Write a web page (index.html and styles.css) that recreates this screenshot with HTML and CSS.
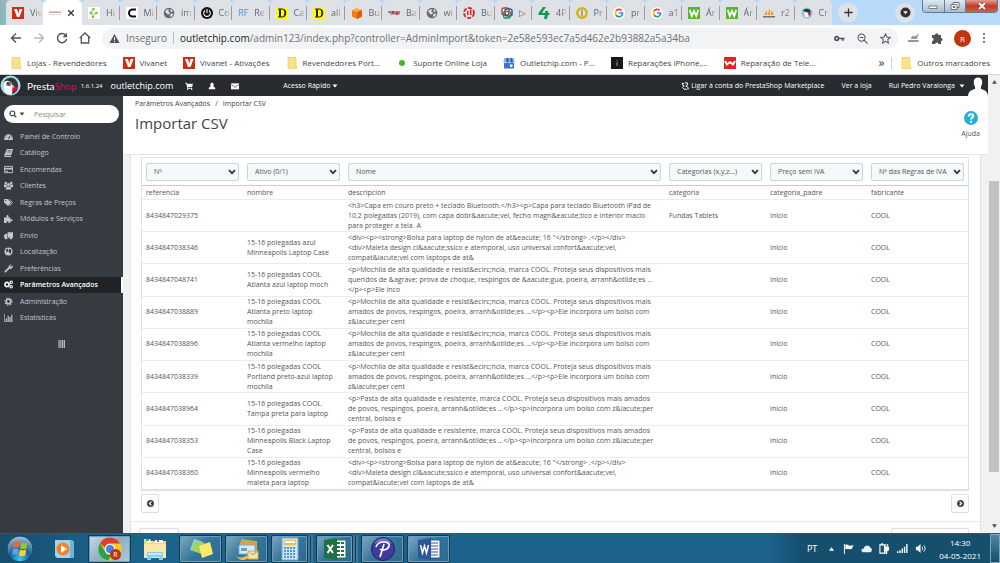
FILE: index.html
```html
<!DOCTYPE html>
<html lang="pt">
<head>
<meta charset="utf-8">
<title>Importar CSV</title>
<link rel="stylesheet" href="styles.css">
</head>
<body>
<svg class="defs" aria-hidden="true">
  <symbol id="viva" viewBox="0 0 12 12"><path fill="#d52b12" d="M0 0h12v12H0z"/><path fill="#fff" d="M2 2h3l1.300 4.500L7.500 2H10.500L7.500 10H5z"/></symbol>
  <symbol id="globe" viewBox="0 0 12 12"><circle cx="6" cy="6" r="5.300" fill="#646a70"/><path fill="#dee1e6" d="M2 4l3-2 1 1-1 1.500 2 1-1 2-2-.5-1-1.500zM8 2l2 2-1.500 1L7 4zM8 6.500l2.500.3-1.500 2.500-2 .7 0-1.500z"/></symbol>
  <symbol id="google" viewBox="0 0 12 12"><circle cx="6" cy="6" r="6" fill="#fff"/><g fill="none" stroke-width="1.700"><path stroke="#ea4335" d="M2.900 4.200A3.500 3.500 0 0 1 8.600 3.500"/><path stroke="#fbbc05" d="M2.900 4.200A3.600 3.600 0 0 0 3 8"/><path stroke="#34a853" d="M3 8a3.500 3.500 0 0 0 5.400.8"/><path stroke="#4285f4" d="M8.400 8.800A3.500 3.500 0 0 0 9.500 6H6"/></g></symbol>
  <symbol id="dee" viewBox="0 0 12 12"><path fill="#ff0" d="M0 0h12v12H0z"/><path fill="#222" fill-rule="evenodd" d="M2 1.500h4.500c5 0 5 9 0 9H2v-1h1v-7H2zM5 2.500v7h1.300c2.800 0 2.800-7 0-7z"/></symbol>
  <symbol id="wgreen" viewBox="0 0 12 12"><path fill="#5cb531" d="M0 0h12v12H0z"/><path fill="none" stroke="#fff" stroke-width="1.800" d="M1.800 3l2 6L6 4l2.200 5 2-6"/></symbol>
  <symbol id="folder" viewBox="0 0 11 12"><path fill="#fbe08a" stroke="#edc95f" stroke-width=".7" d="M1.500.5h8v8l.8 1v2H1.500z"/></symbol>
  <symbol id="chev" viewBox="0 0 8 6"><path fill="none" stroke="#333" stroke-width="1.700" d="M1 1.200l3 3 3-3"/></symbol>
  <symbol id="caret" viewBox="0 0 6 4"><path fill="currentColor" d="M.5.500h5L3 3.500z"/></symbol>
</svg>

<header class="tabstrip">
  <nav class="tabs" aria-label="Separadores">
    <button class="tab first"><svg class="fav"><use href="#viva"/></svg><span>Viv</span></button>
    <button class="tab active"><svg class="fav" viewBox="0 0 12 12"><path fill="#c9a58d" d="M0 4.500h12v1.500H0z"/><path fill="#ddd" d="M0 7h12v1H0z"/></svg><svg class="x" viewBox="0 0 8 8"><path stroke="#333" stroke-width="1.300" d="M1.200 1.200l5.600 5.600M6.800 1.200L1.200 6.800"/></svg></button>
    <button class="tab"><svg class="fav" viewBox="0 0 12 12"><path fill="#fff" d="M0 0h12v12H0z"/><g fill="#72c53b"><circle cx="5.500" cy="2" r="1.300"/><circle cx="3" cy="6" r="1.500"/><circle cx="8.500" cy="6" r="1.300"/><circle cx="5" cy="10" r="1.300"/></g><path fill="none" stroke="#72c53b" d="M3 6l2-3M4 9l4-3"/></svg><span>Hi</span></button>
    <button class="tab"><svg class="fav" viewBox="0 0 12 12"><path fill="#fff" d="M0 0h12v12H0z"/><path fill="none" stroke="#111" stroke-width="2" d="M10 2.500H6.500a3.500 3.500 0 0 0 0 7H10"/></svg><span>Mi</span></button>
    <button class="tab"><svg class="fav"><use href="#globe"/></svg><span>im</span></button>
    <button class="tab"><svg class="fav" viewBox="0 0 12 12"><circle cx="6" cy="6" r="6" fill="#111"/><path fill="none" stroke="#fff" stroke-width="1.100" d="M4 3.500a3.300 3.300 0 1 0 4 0M6 2v4"/></svg><span>Co</span></button>
    <button class="tab"><b class="rf">RF</b><span>Re</span></button>
    <button class="tab"><svg class="fav"><use href="#dee"/></svg><span>Ca</span></button>
    <button class="tab"><svg class="fav"><use href="#dee"/></svg><span>all</span></button>
    <button class="tab"><svg class="fav" viewBox="0 0 12 12"><path fill="#f77b10" d="M1 3l5 2 5-2v6.500L6 12 1 9.500z"/><path fill="#ffa940" d="M1 3l3-1 1.500-1.500L8 2l3 1-5 2z"/><path fill="#d95f04" d="M6 5l5-2v6.500L6 12z"/></svg><span>Bu</span></button>
    <button class="tab"><svg class="fav" viewBox="0 0 12 12"><path fill="#9b8585" d="M0 4h12v2H0zM2 6h10v1.500H2z"/><path fill="#c03b3b" d="M4 4h2v3H4zM8 5h2v3H8z"/></svg><span>Ba</span></button>
    <button class="tab"><svg class="fav"><use href="#globe"/></svg><span>wi</span></button>
    <button class="tab"><svg class="fav" viewBox="0 0 12 12"><circle cx="6" cy="6" r="5" fill="none" stroke="#dc2430" stroke-width="1.800" stroke-dasharray="4 1.500"/><path fill="#dc2430" d="M4 4h1.500v4H4zM7 3h1.500v5H7z"/></svg><span>Bu</span></button>
    <button class="tab"><svg class="fav" viewBox="0 0 12 12"><path fill="#fff" d="M1 1h10v10H1z"/><g fill="none" stroke-width="1.500"><rect x="1" y="1" width="7" height="7" rx="2" stroke="#d9332e"/><rect x="4" y="2" width="7" height="7" rx="2" stroke="#2457a8"/><rect x="2.500" y="4.500" width="7" height="6.500" rx="2" stroke="#189b4b"/></g></svg><span>▷</span></button>
    <button class="tab"><svg class="fav" viewBox="0 0 12 12"><path fill="#179b4a" d="M5 0h3L4 6h3V4h3v2h1.500v2H10l-1 4H6l.8-4H.5V6z"/></svg><span>4P</span></button>
    <button class="tab"><svg class="fav" viewBox="0 0 12 12"><circle cx="6" cy="6" r="4.700" fill="none" stroke="#cdb515" stroke-width="2.400"/><path stroke="#806e12" d="M6 3v6"/></svg><span>Pr</span></button>
    <button class="tab"><svg class="fav"><use href="#google"/></svg><span>pr</span></button>
    <button class="tab"><svg class="fav"><use href="#google"/></svg><span>a1</span></button>
    <button class="tab"><svg class="fav"><use href="#wgreen"/></svg><span>Ár</span></button>
    <button class="tab"><svg class="fav"><use href="#wgreen"/></svg><span>Ár</span></button>
    <button class="tab"><svg class="fav" viewBox="0 0 12 12"><path fill="#f39b20" d="M1 8l3-5v5zM4.500 8L7 1v7zM8 8V3l3 5z"/><path fill="#77746f" d="M0 9h12v1.500H0z"/></svg><span>r2</span></button>
    <button class="tab"><svg class="fav" viewBox="0 0 12 12"><circle cx="6" cy="6" r="5.500" fill="#8bcbd6"/><path fill="#343638" d="M2 4c1-3 7-3 8 1L8 6 5 5z"/><path fill="#fff" d="M3 5l5 1v4H4z"/><path fill="#df0067" d="M7 6h3l-2 4z"/></svg><span>Cr</span></button>
  </nav>
  <button class="round" aria-label="Novo separador"><svg viewBox="0 0 12 12"><path stroke="#333" stroke-width="1.400" d="M6 1.500v9M1.500 6h9"/></svg></button>
  <button class="round menu" aria-label="Procurar"><svg viewBox="0 0 12 12"><circle cx="6" cy="6" r="5.500" fill="#333"/><path fill="#fff" d="M3.500 4.500h5L6 8z"/></svg></button>
  <div class="wincontrols">
    <button aria-label="Minimizar"><svg viewBox="0 0 10 8"><path fill="#fff" stroke="#555" stroke-width=".7" d="M1 4h8v2.500H1z"/></svg></button>
    <button aria-label="Restaurar"><svg viewBox="0 0 10 8"><path fill="#fff" stroke="#555" stroke-width=".8" d="M3 .5h6v5H3z"/><path fill="#fff" stroke="#555" stroke-width=".8" d="M1 2.500h6v5H1zM3 4.500h2v1H3z"/></svg></button>
    <button class="close" aria-label="Fechar"><svg viewBox="0 0 10 8"><path stroke="#733" stroke-width="3" d="M2 1l6 6M8 1L2 7"/><path stroke="#fff" stroke-width="1.900" d="M2 1l6 6M8 1L2 7"/></svg></button>
  </div>
</header>

<div class="toolbar">
  <button aria-label="Anterior"><svg viewBox="0 0 12 12"><path fill="none" stroke="#50545a" stroke-width="1.400" d="M11 6H1.500M6 1.500L1.500 6 6 10.500"/></svg></button>
  <button aria-label="Seguinte"><svg viewBox="0 0 12 12"><path fill="none" stroke="#b5b8bc" stroke-width="1.400" d="M1 6h9.500M6 1.500L10.500 6 6 10.500"/></svg></button>
  <button aria-label="Atualizar"><svg viewBox="0 0 12 12"><path fill="none" stroke="#50545a" stroke-width="1.400" d="M9.500 3A4.600 4.600 0 1 0 10.600 7"/><path fill="#50545a" d="M11 .8v4.500H6.500z"/></svg></button>
  <button aria-label="Início"><svg viewBox="0 0 12 12"><path fill="none" stroke="#50545a" stroke-width="1.300" d="M.8 6L6 1l5.200 5M2.300 5v6h7.400V5"/></svg></button>
  <div class="omnibox">
    <svg class="warn" viewBox="0 0 12 12"><path fill="#50545a" d="M6 1l5.500 10H.5z"/><path stroke="#fff" stroke-width="1.200" d="M6 4.500v3M6 8.500v1.200"/></svg>
    <span class="insecure">Inseguro</span>
    <span class="url"><b>outletchip.com</b>/admin123/index.php?controller=AdminImport&amp;token=2e58e593ec7a5d462e2b93882a5a34ba</span>
    <svg viewBox="0 0 12 12"><path fill="none" stroke="#50545a" stroke-width="1.800" d="M5 6a2 2 0 1 0-4 0 2 2 0 1 0 4 0h6.500M9.500 6v2.500"/></svg>
    <svg viewBox="0 0 12 12"><path fill="none" stroke="#50545a" stroke-width="1.100" d="M8.800 5a3.900 3.900 0 1 0-7.800 0 3.900 3.900 0 1 0 7.800 0M8 8l3.500 3.500M3 5h3.800"/></svg>
    <svg viewBox="0 0 12 12"><path fill="none" stroke="#50545a" stroke-width="1.100" d="M6 1l1.500 3.400 3.700.4-2.800 2.500.8 3.700L6 9.100 2.800 11l.8-3.700L.8 4.800l3.700-.4z"/></svg>
  </div>
  <svg class="ext" viewBox="0 0 12 12"><path fill="#979797" d="M0 8h11l-1 2H0zM3 7c0-3 2-4 3-3s2 0 5-3L9 7z"/></svg>
  <svg class="ext" viewBox="0 0 12 12"><path fill="#50545a" d="M1 3h3a1.700 1.700 0 0 1 3.400 0H10v3a1.600 1.600 0 0 1 0 3.200V12H7.500a1.600 1.600 0 0 0-3.200 0H1V9a1.600 1.600 0 0 0 0-3.200z"/></svg>
  <button class="avatar">R</button>
  <button class="dots" aria-label="Menu"><svg viewBox="0 0 4 12"><g fill="#50545a"><circle cx="2" cy="2" r="1"/><circle cx="2" cy="6" r="1"/><circle cx="2" cy="10" r="1"/></g></svg></button>
</div>

<nav class="bookmarks" aria-label="Marcadores">
  <a href="#"><svg><use href="#folder"/></svg>Lojas - Revendedores</a>
  <a href="#"><svg><use href="#viva"/></svg>Vivanet</a>
  <a href="#"><svg><use href="#viva"/></svg>Vivanet - Ativações</a>
  <a href="#"><svg><use href="#folder"/></svg>Revendedores Port...</a>
  <a href="#"><svg viewBox="0 0 12 12"><circle cx="6" cy="6" r="3" fill="#43b52b"/></svg>Suporte Online Loja</a>
  <a href="#"><svg viewBox="0 0 12 12"><path fill="#3d6fd8" d="M1 6h10v5.500H1z"/><path fill="#86abef" d="M1.500 1h9l1.200 4.500H.3z"/><path fill="#2857b9" d="M3.500 1h2v4.500h-2zM7.500 1H9l1 4.500H7.500z"/><path fill="#fff" d="M7 7.500h2.500V10H7z"/></svg>Outletchip.com - P...</a>
  <a href="#"><svg viewBox="0 0 12 12"><path fill="#181818" d="M0 0h12v12H0z"/><path stroke="#999" d="M6 3v1M6 5v4"/></svg>Reparações iPhone,...</a>
  <a href="#"><svg viewBox="0 0 12 12"><path fill="#e52121" d="M0 0h12v12H0z"/><path fill="none" stroke="#fff" stroke-width="2" d="M1 4l2 3.500L6 5l3 2.500L11 4"/></svg>Reparação de Tele...</a>
  <button class="more">»</button>
  <a class="others" href="#"><svg><use href="#folder"/></svg>Outros marcadores</a>
</nav>

<div class="viewport">
  <div class="app">
    <header class="topbar">
      <svg class="puffin" viewBox="0 0 22 22"><circle cx="10.500" cy="11" r="10.500" fill="#a9d9e5"/><path fill="#33383b" d="M3 9C4 3 12 1 16 5c3 3 3 8 1 12l-4 3H7z"/><path fill="#fff" d="M3 9c1-4 7-4 9 0l1 5-1 6c-4 1-7-1-8-4z"/><path fill="#77736c" d="M6 8c2-2 5-1 6 1l-2 3-4-1z"/><circle cx="8" cy="9" r="1" fill="#222"/><path fill="#e0005d" d="M13 12l5 1-2 5-4-2z"/><path fill="#d3ad6f" d="M12 10l3 2-3 3z"/></svg>
      <strong class="brand">Presta<i>Shop</i></strong>
      <span class="version">1.6.1.24</span>
      <a class="shop" href="#">outletchip.com</a>
      <a href="#" class="ico" aria-label="Encomendas"><svg viewBox="0 0 12 12"><path fill="#fff" d="M0 1h2.500l.5 1.500h9L10.500 8H4v1h7v1H3V7L1.800 2.200H0z"/><circle cx="4" cy="11" r="1" fill="#fff"/><circle cx="10" cy="11" r="1" fill="#fff"/></svg></a>
      <a href="#" class="ico" aria-label="Clientes"><svg viewBox="0 0 12 12"><path fill="#fff" d="M6 1c3 0 3 4 1.500 5.500C10 7 11 9 11 11H1c0-2 1-4 3.500-4.500C3 5 3 1 6 1z"/></svg></a>
      <a href="#" class="ico" aria-label="Mensagens"><svg viewBox="0 0 12 12"><path fill="#fff" d="M0 2h12v9H0z"/><path fill="none" stroke="#282b30" d="M.5 4L6 8l5.500-4"/></svg></a>
      <button class="quick">Acesso Rápido <svg class="caret"><use href="#caret"/></svg></button>
      <a class="market" href="#"><svg viewBox="0 0 10 10"><path fill="none" stroke="#fff" stroke-width="1.200" d="M2 1v3l2 1-2 2 2 2h4M1 2h3M5 1h3v3L6 5l3 2v2"/></svg>Ligar à conta do PrestaShop Marketplace</a>
      <a href="#">Ver a loja</a>
      <button class="user">Rui Pedro Varalonga <svg class="caret"><use href="#caret"/></svg></button>
      <svg class="person" viewBox="0 0 20 21"><path fill="#fff" d="M10 2.500c5 0 5 6 3 9v2.500c3 1 6.500 1.500 7 7H0c.5-5.500 4-6 7-7v-2.500c-2-3-2-9 3-9z"/></svg>
    </header>

    <div class="columns">
      <aside class="sidebar">
        <form class="search"><svg viewBox="0 0 9 9"><circle cx="3.800" cy="3.800" r="2.700" fill="none" stroke="#444" stroke-width="1.300"/><path stroke="#444" stroke-width="1.500" d="M5.800 5.800l2.500 2.500"/></svg><svg class="caret"><use href="#caret"/></svg><input type="text" placeholder="Pesquisar" aria-label="Pesquisar"></form>
        <nav>
          <a href="#"><svg viewBox="0 0 10 10"><path fill="currentColor" d="M0 8a5 5.500 0 1 1 10 0l-1 1H1z"/><path stroke="#363a41" d="M5 8l1.500-4M1.500 6h1M7.500 6h1M3 3.500l.7.700"/></svg>Painel de Controlo</a>
          <a href="#"><svg viewBox="0 0 10 10"><path fill="currentColor" d="M3 1h7L8 8H2L1.500 9H8v1H1.500C0 10 0 8.500.6 7.500z"/><path stroke="#363a41" stroke-width=".7" d="M4 3h4M3.500 4.500h4"/></svg>Catálogo</a>
          <a href="#"><svg viewBox="0 0 10 10"><path fill="none" stroke="currentColor" d="M.5 1.500h9v7h-9z"/><path fill="currentColor" d="M0 3h10v2H0zM1.500 6.500h3v1h-3z"/></svg>Encomendas</a>
          <a href="#"><svg viewBox="0 0 10 10"><g fill="currentColor"><circle cx="2" cy="2.300" r="1.400"/><circle cx="8" cy="2.300" r="1.400"/><circle cx="5" cy="3.800" r="1.700"/><path d="M0 4h3l.5 2L2 7H0zM7 4h3v3H8L6.500 6zM2 9.500C2 7 3 6 5 6s3 1 3 3.500z"/></g></svg>Clientes</a>
          <a href="#"><svg viewBox="0 0 10 10"><path fill="currentColor" fill-rule="evenodd" d="M0 1h4l4 4-3.500 4L0 5zM1.200 2.200v1h1v-1zM5 1h1l4 4-3.500 4-.7-.5L9 5z"/></svg>Regras de Preços</a>
          <a href="#"><svg viewBox="0 0 10 10"><path fill="currentColor" d="M0 4h3c-1-4 3-4 2 0h2v2c3-1 4 3 0 2v2H5C5 7 3 7 3 10H0z"/></svg>Módulos e Serviços</a>
          <a href="#"><svg viewBox="0 0 10 10"><path fill="currentColor" d="M4 1.500h6v6H4zM0 5l1.500-2h2v4.500H0z"/><circle cx="2.300" cy="8" r="1.300" fill="currentColor"/><circle cx="7.700" cy="8" r="1.300" fill="currentColor"/></svg>Envio</a>
          <a href="#"><svg viewBox="0 0 10 10"><circle cx="5" cy="5" r="4.500" fill="currentColor"/><path fill="#363a41" d="M2 3l2-1 1 2-2 2zM6 2l2 1v2l-1 3-1-2-1-1z"/></svg>Localização</a>
          <a href="#"><svg viewBox="0 0 10 10"><path fill="none" stroke="currentColor" stroke-width="2" stroke-linecap="round" d="M1.500 8.500L6 4"/><path fill="currentColor" d="M8.500.5L6.700 2.300l1 1L9.600 1.500c1 3-2 5-4.100 3.500C4 2.500 6 0 8.500.5z"/></svg>Preferências</a>
          <a class="current" href="#"><svg viewBox="0 0 10 10"><circle cx="3.300" cy="5" r="2.200" fill="none" stroke="currentColor" stroke-width="1.600"/><circle cx="3.300" cy="5" r="3.100" fill="none" stroke="currentColor" stroke-width=".8" stroke-dasharray="1.200"/><circle cx="8" cy="2.500" r="1.300" fill="none" stroke="currentColor" stroke-width="1.200"/><circle cx="8" cy="7.500" r="1.300" fill="none" stroke="currentColor" stroke-width="1.200"/></svg>Parâmetros Avançados</a>
          <a href="#"><svg viewBox="0 0 10 10"><circle cx="5" cy="5" r="2.500" fill="none" stroke="currentColor" stroke-width="1.800"/><circle cx="5" cy="5" r="4" fill="none" stroke="currentColor" stroke-width="1.200" stroke-dasharray="1.570"/></svg>Administração</a>
          <a href="#"><svg viewBox="0 0 10 10"><path fill="none" stroke="currentColor" stroke-width=".8" d="M.5 1v8.500H10"/><path fill="currentColor" d="M2 6h1.300v3H2zM4 3h1.300v6H4zM6 4.500h1.300V9H6zM8 2h1.300v7H8z"/></svg>Estatísticas</a>
        </nav>
        <button class="collapse" aria-label="Recolher menu"><svg viewBox="0 0 7 8"><path stroke="#b9bcc0" stroke-width="1.200" d="M1 0v8M2.800 0v8M4.600 0v8M6.400 0v8"/></svg></button>
      </aside>

      <main>
        <div class="pagehead">
          <div>
            <p class="crumbs"><a href="#">Parâmetros Avançados</a><span>/</span><a href="#">Importar CSV</a></p>
            <h1>Importar CSV</h1>
          </div>
          <a class="help" href="#"><svg viewBox="0 0 14 14"><circle cx="7" cy="7" r="7" fill="#24b0d5"/><path fill="none" stroke="#fff" stroke-width="2" d="M4.800 5.500C4.800 2.500 9.300 2.700 9.300 5c0 1.500-2.200 1.600-2.200 3.500M7.100 9.700v2"/></svg>Ajuda</a>
        </div>
        <section class="panel">
          <div class="panelbody">
          <table>
            <colgroup><col class="c"><col class="c"><col class="wide"><col class="c"><col class="c"><col class="c"></colgroup>
            <thead>
              <tr>
                <th><label class="pick"><select aria-label="Coluna 1"><option>Nº</option></select><svg><use href="#chev"/></svg></label></th>
                <th><label class="pick"><select aria-label="Coluna 2"><option>Ativo (0/1)</option></select><svg><use href="#chev"/></svg></label></th>
                <th><label class="pick"><select aria-label="Coluna 3"><option>Nome</option></select><svg><use href="#chev"/></svg></label></th>
                <th><label class="pick"><select aria-label="Coluna 4"><option>Categorias (x,y,z...)</option></select><svg><use href="#chev"/></svg></label></th>
                <th><label class="pick"><select aria-label="Coluna 5"><option>Preço sem IVA</option></select><svg><use href="#chev"/></svg></label></th>
                <th><label class="pick"><select aria-label="Coluna 6"><option>Nº das Regras de IVA</option></select><svg><use href="#chev"/></svg></label></th>
              </tr>
            </thead>
            <tbody>
              <tr class="names"><td>referencia</td><td>nombre</td><td>descripcion</td><td>categoria</td><td>categoria_padre</td><td>fabricante</td></tr>
              <tr><td>8434847029375</td><td></td><td>&lt;h3&gt;Capa em couro preto + teclado Bluetooth.&lt;/h3&gt;&lt;p&gt;Capa para teclado Bluetooth iPad de<br>10,2 polegadas (2019), com capa dobr&amp;aacute;vel, fecho magn&amp;eacute;tico e interior macio<br>para proteger a tela. A</td><td>Fundas Tablets</td><td>Inicio</td><td>COOL</td></tr>
              <tr><td>8434847038346</td><td>15-16 polegadas azul<br>Minneapolis Laptop Case</td><td>&lt;div&gt;&lt;p&gt;&lt;strong&gt;Bolsa para laptop de nylon de at&amp;eacute; 16 "&lt;/strong&gt; .&lt;/p&gt;&lt;/div&gt;<br>&lt;div&gt;Maleta design cl&amp;aacute;ssico e atemporal, uso universal confort&amp;aacute;vel,<br>compat&amp;iacute;vel com laptops de at&amp;</td><td></td><td>Inicio</td><td>COOL</td></tr>
              <tr><td>8434847048741</td><td>15-16 polegadas COOL<br>Atlanta azul laptop moch</td><td>&lt;p&gt;Mochila de alta qualidade e resist&amp;ecirc;ncia, marca COOL. Proteja seus dispositivos mais<br>queridos de &amp;agrave; prova de choque, respingos de &amp;aacute;gua, poeira, arranh&amp;otilde;es ...<br>&lt;/p&gt;&lt;p&gt;Ele inco</td><td></td><td>Inicio</td><td>COOL</td></tr>
              <tr><td>8434847038889</td><td>15-16 polegadas COOL<br>Atlanta preto laptop<br>mochila</td><td>&lt;p&gt;Mochila de alta qualidade e resist&amp;ecirc;ncia, marca COOL. Proteja seus dispositivos mais<br>amados de povos, respingos, poeira, arranh&amp;otilde;es ...&lt;/p&gt;&lt;p&gt;Ele incorpora um bolso com<br>z&amp;iacute;per cent</td><td></td><td>Inicio</td><td>COOL</td></tr>
              <tr><td>8434847038896</td><td>15-16 polegadas COOL<br>Atlanta vermelho laptop<br>mochila</td><td>&lt;p&gt;Mochila de alta qualidade e resist&amp;ecirc;ncia, marca COOL. Proteja seus dispositivos mais<br>amados de povos, respingos, poeira, arranh&amp;otilde;es ...&lt;/p&gt;&lt;p&gt;Ele incorpora um bolso com<br>z&amp;iacute;per cent</td><td></td><td>Inicio</td><td>COOL</td></tr>
              <tr><td>8434847038339</td><td>15-16 polegadas COOL<br>Portland preto-azul laptop<br>mochila</td><td>&lt;p&gt;Mochila de alta qualidade e resist&amp;ecirc;ncia, marca COOL. Proteja seus dispositivos mais<br>amados de povos, respingos, poeira, arranh&amp;otilde;es ...&lt;/p&gt;&lt;p&gt;Ele incorpora um bolso com<br>z&amp;iacute;per cent</td><td></td><td>Inicio</td><td>COOL</td></tr>
              <tr><td>8434847038964</td><td>15-16 polegadas COOL<br>Tampa preta para laptop</td><td>&lt;p&gt;Pasta de alta qualidade e resistente, marca COOL. Proteja seus dispositivos mais amados<br>de povos, respingos, poeira, arranh&amp;otilde;es ...&lt;/p&gt;&lt;p&gt;Incorpora um bolso com z&amp;iacute;per<br>central, bolsos e</td><td></td><td>Inicio</td><td>COOL</td></tr>
              <tr><td>8434847038353</td><td>15-16 polegadas<br>Minneapolis Black Laptop<br>Case</td><td>&lt;p&gt;Pasta de alta qualidade e resistente, marca COOL. Proteja seus dispositivos mais amados<br>de povos, respingos, poeira, arranh&amp;otilde;es ...&lt;/p&gt;&lt;p&gt;Incorpora um bolso com z&amp;iacute;per<br>central, bolsos e</td><td></td><td>Inicio</td><td>COOL</td></tr>
              <tr><td>8434847038360</td><td>15-16 polegadas<br>Minneapolis vermelho<br>maleta para laptop</td><td>&lt;div&gt;&lt;p&gt;&lt;strong&gt;Bolsa para laptop de nylon de at&amp;eacute; 16 "&lt;/strong&gt; .&lt;/p&gt;&lt;/div&gt;<br>&lt;div&gt;Maleta design cl&amp;aacute;ssico e atemporal, uso universal confort&amp;aacute;vel,<br>compat&amp;iacute;vel com laptops de at&amp;</td><td></td><td>Inicio</td><td>COOL</td></tr>
            </tbody>
          </table>
          <div class="pager">
            <button aria-label="Anterior"><svg viewBox="0 0 8 8"><circle cx="4" cy="4" r="4" fill="#444"/><path fill="none" stroke="#fff" stroke-width="1.300" d="M5 1.800L2.800 4 5 6.200"/></svg></button>
            <button aria-label="Seguinte"><svg viewBox="0 0 8 8"><circle cx="4" cy="4" r="4" fill="#444"/><path fill="none" stroke="#fff" stroke-width="1.300" d="M3 1.800L5.200 4 3 6.200"/></svg></button>
          </div>
          </div>
          <footer><button class="cancel" aria-label="Cancelar"></button><button class="import" aria-label="Importar"></button></footer>
        </section>
      </main>
    </div>
  </div>
  <div class="scrollbar"><svg viewBox="0 0 6 4"><path fill="#505050" d="M3 0l3 4H0z"/></svg><div class="track"><div class="thumb"></div></div><svg viewBox="0 0 6 4"><path fill="#505050" d="M3 4l3-4H0z"/></svg></div>
</div>

<footer class="taskbar">
  <button class="start" aria-label="Iniciar"><svg viewBox="0 0 28 28"><defs><radialGradient id="orb" cx=".5" cy=".9" r=".9"><stop offset="0" stop-color="#38d0f7"/><stop offset=".45" stop-color="#1a5d94"/><stop offset="1" stop-color="#a8c4d6"/></radialGradient></defs><circle cx="14" cy="14" r="13" fill="url(#orb)" stroke="#17466a"/><path fill="#ef6535" d="M8 7c2-1 4-1 6 0l-1 6c-2-1-4-1-6 0z"/><path fill="#8fc545" d="M15 7.500c2 1 4 1 6.500 0l-1 6c-2 1-4.500 1-6.500 0z"/><path fill="#55a6e2" d="M6.800 14c2-1 4-1 6 0l-1 6c-2-1-4-1-6 0z"/><path fill="#fbce39" d="M13.800 14.500c2 1 4 1 6.500 0l-1 6c-2 1-4.500 1-6.500 0z"/></svg></button>
  <button class="plain" aria-label="Leitor multimédia"><svg viewBox="0 0 24 24"><path fill="#a2d3ec" d="M3 3h17l2 2v16H5l-2-2z"/><path fill="#6fb6dc" d="M18 3h2l2 2v16h-4z"/><circle cx="11" cy="12" r="6.500" fill="#f58220"/><path fill="#fff" d="M9 8l6 4-6 4z"/></svg></button>
  <button class="task lit" aria-label="Chrome"><svg viewBox="0 0 24 24"><circle cx="12" cy="12" r="11.500" fill="#fbc921"/><path fill="#df3d32" d="M2 6.200A11.500 11.500 0 0 1 22 6.500H12a5.500 5.500 0 0 0-5.200 4z"/><path fill="#2ca14d" d="M2 6.200L7 14.500a5.500 5.500 0 0 0 6.500 3l-3 6A11.500 11.500 0 0 1 2 6.200z"/><circle cx="12" cy="12" r="5.200" fill="#fff"/><circle cx="12" cy="12" r="4.200" fill="#4387ee"/></svg><span class="badge">R</span></button>
  <button class="plain" aria-label="Explorador"><svg viewBox="0 0 24 24"><path fill="#f2d77b" d="M1 2h6l1 2h15v17H1z"/><path fill="#fff" d="M4 3h4v3H4zM12 3h8v3h-8z"/><path fill="#4eb748" d="M3 2h3v2H3z"/><path fill="#df5536" d="M14 3h2v2h-2z"/><path fill="#fae8a4" d="M1 7h22v14H1z"/><path fill="#8acdea" d="M4 15h16v8h-4v-3H8v3H4z"/><path fill="#c7eaf7" d="M5 16h14v2H5z"/></svg></button>
  <button class="task" aria-label="Notas"><svg viewBox="0 0 24 24"><path fill="#8ed2e8" d="M5 2l9 3-3 11-10-3z"/><path fill="#a2d55d" d="M7 4l11 3-3 11-13-5z"/><path fill="#fce96c" d="M10 9l11-4 3 12-11 4z"/></svg></button>
  <button class="task" aria-label="Correio"><svg viewBox="0 0 24 24"><path fill="#8dc55d" d="M6 2l16 2v10H6z"/><path fill="#f29a37" d="M5 5h17v12H5z"/><path fill="#d6edf9" stroke="#6eafd6" d="M4 8h16v9H4z"/><path fill="#64a3cf" d="M6 11h6v3H6z"/><path fill="#edbd51" d="M1 19c4 3 9 1 11-1l2 3c-5 3-10 3-13-2z"/><path fill="#fbe79a" stroke="#d5aa4e" d="M13 14h10v8H13zM13 14l5 4 5-4"/></svg></button>
  <button class="task stack" aria-label="Calculadora"><svg viewBox="0 0 24 24"><path fill="#cce5f4" stroke="#75aacd" d="M4 1h16v22H4z"/><path fill="#f2b958" d="M6 3h12v5H6z"/><path fill="#fff" d="M7 4h10v2H7z"/><path stroke="#5a96bf" stroke-width="2" stroke-dasharray="2 1" d="M6 11h12M6 14h12M6 17h12M6 20h12"/></svg></button>
  <button class="task stack" aria-label="Excel"><svg viewBox="0 0 24 24"><path fill="#fff" stroke="#207346" d="M12 3h11v18H12z"/><path stroke="#207346" stroke-width="2" stroke-dasharray="3 1" d="M14 6h8M14 10h8M14 14h8M14 18h8"/><path fill="#1e7145" d="M1 3l13-2v22L1 21z"/><path stroke="#fff" stroke-width="2" d="M4.500 8l5.500 8M10 8l-5.500 8"/></svg></button>
  <button class="task" aria-label="PhotoScape"><svg viewBox="0 0 24 24"><circle cx="12" cy="12" r="11.500" fill="#413aa0" stroke="#20205e"/><path fill="#7771d0" d="M3 7a10 10 0 0 1 18 0c-5-3-12-3-18 0z"/><path fill="none" stroke="#fff" stroke-width="1.700" d="M9 20l4-13M5 10c2-7 15-6 13-1-1 4-7 5-9 3"/></svg></button>
  <button class="task" aria-label="Word"><svg viewBox="0 0 24 24"><path fill="#fff" stroke="#2a579a" d="M12 3h11v18H12z"/><path stroke="#2a579a" stroke-width="1" d="M14 6h7M14 9h7M14 12h7M14 15h7M14 18h7"/><path fill="#2b579a" d="M1 3l13-2v22L1 21z"/><path fill="none" stroke="#fff" stroke-width="1.500" d="M3.500 8l2 8 2-7 2 7 2-8"/></svg></button>
  <div class="tray">
    <span class="lang">PT</span>
    <svg class="up" viewBox="0 0 6 4"><path fill="#fff" d="M3 0l3 4H0z"/></svg>
    <svg viewBox="0 0 12 12"><path fill="#fff" d="M1 1h1v11H1zM2.500 2c3-1 3 1 5 1l4-.5-2 4c-3 1-4-.5-7 .5z"/></svg>
    <svg viewBox="0 0 12 12"><path fill="#e7f0f5" d="M2 10c-3-2-1-4 1-4 1-4 6-4 7-1 3 1 2 5 0 5z"/></svg>
    <svg viewBox="0 0 12 12"><path fill="none" stroke="#fff" stroke-width="1.200" d="M1 2h5v9H1zM2.500 1h2"/><path fill="#fff" d="M6 4h1V1h1v3h1V1h1v3h1v4L9 9v3H7V9L6 8z"/></svg>
    <svg viewBox="0 0 12 12"><path fill="#fff" d="M0 9h1.500v2H0zM2.500 8H4v3H2.500zM5 6h1.500v5H5zM7.500 4H9v7H7.500zM10 1h1.500v10H10z"/></svg>
    <svg viewBox="0 0 12 12"><path fill="#fff" d="M1 4h2l3-3v10L3 8H1z"/><path fill="none" stroke="#fff" d="M7.500 4c1 1 1 3 0 4M9.500 2.500c2 2 2 5 0 7"/></svg>
    <time>14:30<br>04-05-2021</time>
    <button class="desktop" aria-label="Mostrar ambiente de trabalho"></button>
  </div>
</footer>
</body>
</html>
```
FILE: styles.css
```css
* { box-sizing: border-box; }
body {
  margin: 0;
  height: 100vh;
  overflow: hidden;
  display: flex;
  flex-direction: column;
  font-family: "Open Sans", "Noto Sans", sans-serif;
  font-size: 7px;
  color: #555;
  background: #fff;
}
button {
  padding: 0;
  border: 0;
  background: none;
  font: inherit;
  color: inherit;
  display: flex;
  align-items: center;
  justify-content: center;
}
a { color: inherit; text-decoration: none; }
svg { flex: none; }
.defs { position: absolute; width: 0; height: 0; }

/* Browser tabs */
.tabstrip {
  flex: none;
  height: 25px;
  display: flex;
  align-items: center;
  background: linear-gradient(90deg, #8fb3b5, #b9d9fb 4%, #b9d9fb);
}
.tabs {
  flex: 1;
  align-self: stretch;
  display: flex;
  padding-left: 6px;
}
.tab {
  flex: 1;
  min-width: 0;
  overflow: hidden;
  justify-content: flex-start;
  gap: 6px;
  padding-left: 6px;
  background: #dee1e6;
  border-radius: 5px 5px 0 0;
  font-size: 9px;
  color: #666;
}
.tab:not(.active):not(.first):not(:last-child) {
  background: linear-gradient(#9a9da2, #9a9da2) right center / 1px 14px no-repeat, #dee1e6;
}
.tab span {
  width: 12px;
  overflow: hidden;
  white-space: nowrap;
  text-align: left;
  mask-image: linear-gradient(90deg, #000 40%, transparent);
}
.tab.first { flex: none; width: 37px; }
.tab.active { flex: none; width: 39px; background: #fff; gap: 6px; }
.fav { width: 12px; height: 12px; }
.x { width: 8px; height: 8px; }
.rf { color: #4c98de; font-size: 9px; font-weight: 400; }
.round {
  width: 20px;
  height: 20px;
  margin: 0 6px;
  border-radius: 50%;
  background: #dee1e6;
}
.round svg { width: 11px; height: 11px; }
.round.menu { margin: 0 7px 0 31px; }
.wincontrols {
  align-self: flex-start;
  display: flex;
  width: 76px;
  height: 13px;
  margin-right: 2px;
  border: 1px solid #66798e;
  border-top: 0;
  border-radius: 0 0 4px 4px;
  overflow: hidden;
}
.wincontrols button { flex: 1; background: linear-gradient(#dbe8f4, #a8bdd2); border-right: 1px solid #66798e; }
.wincontrols svg { width: 10px; height: 8px; }
.wincontrols .close { flex: 1 0 10px; border: 0; background: linear-gradient(#e0a090, #bf3d28 50%, #cf624a); }

/* Address bar */
.toolbar {
  flex: none;
  height: 26px;
  display: flex;
  align-items: center;
  padding: 0 10px;
}
.toolbar > button { width: 12px; height: 12px; margin-right: 11px; }
.toolbar > button svg { width: 12px; height: 12px; }
.omnibox {
  flex: 1;
  display: flex;
  align-items: center;
  height: 21px;
  margin-right: 10px;
  padding: 0 7px;
  border-radius: 11px;
  background: #f1f3f4;
  font-size: 10px;
  color: #6d7175;
}
.omnibox svg { width: 11px; height: 11px; margin-left: 12px; }
.omnibox .warn { margin: 0 6px 0 0; }
.insecure { padding-right: 6px; border-right: 1px solid #bbb; line-height: 12px; }
.url { flex: 1; padding-left: 6px; white-space: nowrap; }
.url b { font-weight: 400; color: #222; }
.ext { width: 12px; height: 12px; margin-right: 11px; }
.toolbar .avatar {
  width: 17px;
  height: 17px;
  border-radius: 50%;
  background: #bf360c;
  color: #fff;
  font-size: 8px;
}
.toolbar .dots { width: 4px; margin: 0 4px 0 0; }
.toolbar .dots svg { width: 4px; }

.bookmarks {
  flex: none;
  height: 24px;
  display: flex;
  align-items: center;
  gap: 16px;
  padding: 0 10px;
  font-size: 8px;
  color: #444;
  border-bottom: 1px solid #d5d6d8;
}
.bookmarks a { display: flex; align-items: center; gap: 5px; white-space: nowrap; }
.bookmarks svg { width: 12px; height: 12px; }
.more { margin-left: auto; font-size: 12px; line-height: 12px; }
.bookmarks .others { padding-left: 8px; border-left: 1px solid #d0d0d0; margin-left: -9px; }

/* Page area */
.viewport { flex: 1; min-height: 0; display: flex; }
.app { flex: 1; min-width: 0; display: flex; flex-direction: column; }
.topbar {
  flex: none;
  height: 21px;
  display: flex;
  align-items: center;
  background: #282b30;
  color: #fff;
}
.puffin { width: 22px; height: 21px; margin-right: 5px; }
.brand { font-family: Lato, sans-serif; font-size: 10px; font-weight: 400; }
.brand i { font-style: normal; color: #df0067; }
.version { margin: 0 8px 0 4px; font-size: 6px; }
.shop { font-size: 9px; margin-right: 12px; }
.ico { display: flex; margin-right: 15px; }
.ico svg { width: 8px; height: 8px; }
.quick { margin-left: 29px; gap: 2px; }
.caret { width: 6px; height: 4px; }
.market { display: flex; align-items: center; gap: 2px; margin: 0 17px 0 auto; }
.market svg { width: 8px; height: 8px; }
.user { margin: 0 3px 0 17px; gap: 4px; }
.person { width: 20px; height: 21px; }

.columns { flex: 1; min-height: 0; display: flex; }
.sidebar {
  flex: none;
  width: 123px;
  padding-top: 9px;
  background: #363a41;
  color: #c4c6c9;
}
.search {
  display: flex;
  align-items: center;
  gap: 2px;
  height: 18px;
  margin: 0 4px 5px;
  padding: 0 5px;
  border-radius: 9px;
  background: #fff;
  color: #444;
}
.search svg:first-child { width: 8px; height: 8px; }
.search input { flex: 1; min-width: 0; margin-left: 7px; padding: 0; border: 0; outline: 0; font: inherit; background: none; }
.search input::placeholder { color: #888; }
.sidebar nav { display: grid; grid-auto-rows: 1fr; min-height: 198px; }
.sidebar nav a { display: flex; align-items: center; gap: 7px; padding-left: 4px; }
.sidebar nav svg { width: 9px; height: 9px; }
.sidebar .current { background: #202226; color: #fff; font-weight: 600; border-right: 2px solid #fff; }
.collapse { margin: 14px auto 0; }
.collapse svg { width: 7px; height: 8px; }

main { flex: 1; min-width: 0; display: flex; flex-direction: column; background: #eff1f2; }
.pagehead {
  flex: none;
  height: 59px;
  display: flex;
  justify-content: space-between;
  padding: 3px 8px 0 12px;
  background: #fff;
  border-bottom: 1px solid #e2e4e5;
}
.crumbs { display: flex; gap: 5px; margin: 0; line-height: 10px; color: #444; }
h1 { margin: 4px 0 0; font-size: 15px; line-height: 20px; font-weight: 400; color: #444; }
.help { display: flex; flex-direction: column; align-items: center; gap: 4px; padding-top: 12px; }
.help svg { width: 14px; height: 14px; }
.panel {
  flex: 1;
  min-height: 0;
  overflow: hidden;
  margin: 0 7px;
  border: 1px solid #e0e4e6;
  border-width: 0 1px;
  background: #fff;
}
.panelbody { padding: 2px 11px 8px 10px; }
table {
  width: 100%;
  height: 334px;
  table-layout: fixed;
  border-collapse: separate;
  border-spacing: 0;
  border: 1px solid #dfe1e3;
  border-bottom-width: 2px;
  line-height: 10px;
}
.c { width: 101px; }
th { height: 28px; padding: 0 4px; border-bottom: 1px solid #a8d9ec; font-weight: 400; }
td { padding: 0 4px; white-space: nowrap; border-bottom: 1px solid #eaedef; }
tbody tr:last-child td { border-bottom: 0; }
.names td { height: 14px; }
.pick { display: grid; align-items: center; }
.pick select, .pick svg { grid-area: 1 / 1; }
.pick select {
  appearance: none;
  width: 100%;
  height: 18px;
  padding: 0 15px 0 7px;
  border: 1px solid #c7d6db;
  border-radius: 2px;
  background: #f5f8f9;
  font: inherit;
  color: #555;
}
.pick svg { justify-self: end; width: 8px; height: 6px; margin-right: 3px; pointer-events: none; }
.pager { display: flex; justify-content: space-between; margin-top: 3px; }
.pager button { width: 18px; height: 19px; border: 1px solid #ddd; border-radius: 2px; }
.pager svg { width: 7px; height: 7px; }
.panel footer {
  display: flex;
  justify-content: space-between;
  padding: 6px 11px 0 8px;
  border-top: 1px solid #e8eaec;
  background: #fcfdfe;
}
.panel footer button { height: 30px; border: 1px solid #ddd; border-radius: 2px; background: #fff; }
.panel footer .cancel { width: 40px; }
.panel footer .import { width: 78px; }

.scrollbar {
  flex: none;
  width: 12px;
  display: flex;
  flex-direction: column;
  align-items: center;
  padding: 5px 0;
  background: #f1f1f1;
}
.scrollbar svg { width: 5px; height: 4px; }
.track { flex: 1; width: 10px; display: flex; flex-direction: column; padding: 97px 0 52px; }
.thumb { flex: 1; background: #c1c1c1; }

/* Windows taskbar */
.taskbar {
  flex: none;
  height: 30px;
  display: flex;
  align-items: center;
  gap: 3px;
  border-top: 1px solid #47535c;
  background: linear-gradient(90deg, #174e6e, #1c638c 12%, #1c638c 77%, #164e6e 80%);
  color: #fff;
}
.start { width: 40px; }
.start svg { width: 28px; height: 28px; }
.plain { width: 42px; }
.plain svg, .task svg { width: 24px; height: 24px; }
.task {
  position: relative;
  width: 43px;
  height: 28px;
  border: 1px solid #15394e;
  border-radius: 2px;
  box-shadow: inset 0 0 0 1px #6d9db8;
  background: linear-gradient(135deg, #7faac0, #34759a 50%, #2c6b90);
}
.task.lit { background: linear-gradient(135deg, #c9dae3, #89afc3 50%, #b2cad7); }
.task.stack { width: 37px; margin-right: 5px; box-shadow: inset 0 0 0 1px #6d9db8, 2px 0 #3e7b9d, 3px 0 #15394e, 5px 0 #3e7b9d; }
.badge {
  position: absolute;
  right: 9px;
  bottom: 2px;
  width: 11px;
  height: 11px;
  border-radius: 50%;
  background: #bf360c;
  color: #fff;
  font-size: 7px;
  line-height: 11px;
}
.tray { margin-left: auto; align-self: stretch; display: flex; align-items: center; gap: 7px; }
.tray svg { width: 11px; height: 11px; }
.tray .up { width: 5px; height: 4px; margin: 0 2px 0 5px; }
.lang { font-size: 9px; }
time { margin: 0 2px 0 6px; font-size: 8px; line-height: 13px; text-align: center; }
.desktop { width: 10px; align-self: stretch; border: 1px solid #7aa5bd; background: linear-gradient(#4b86a5, #174e6e); }
```
